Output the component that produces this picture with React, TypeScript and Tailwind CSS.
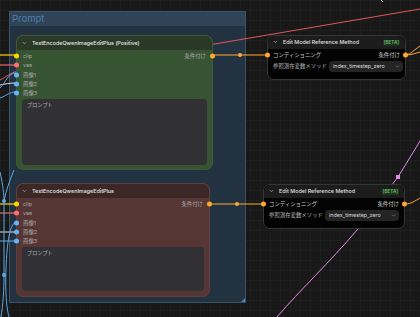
import { ChevronDown } from "lucide-react";

const FONT = "font-['Inter','Noto_Sans_CJK_JP',sans-serif]";

const SLOT_COLORS: Record<string, string> = {
  clip: "bg-[#ffd500]",
  vae: "bg-[#ff6e6e]",
  image: "bg-[#64b5f6]",
  cond: "bg-[#ffa931]",
};

type Slot = { label: string; kind: string };

const ENCODE_INPUTS: Slot[] = [
  { label: "clip", kind: "clip" },
  { label: "vae", kind: "vae" },
  { label: "画像1", kind: "image" },
  { label: "画像2", kind: "image" },
  { label: "画像3", kind: "image" },
];

function Dot({ kind, side }: { kind: string; side: "left" | "right" }) {
  return (
    <span
      className={`absolute top-1/2 h-[5px] w-[5px] -translate-y-1/2 rounded-full ${SLOT_COLORS[kind]} ${
        side === "left" ? "left-[-3px]" : "right-[-3px]"
      }`}
    />
  );
}

function Chevron() {
  return (
    <svg width="5" height="4" viewBox="0 0 5 4" className="shrink-0">
      <path d="M0.8 1 L2.5 2.8 L4.2 1" fill="none" stroke="#9a9a9a" strokeWidth="0.8" />
    </svg>
  );
}

function EncodeNode({
  title,
  left,
  top,
  width,
  height,
  body,
  head,
  border,
  boxHeight,
}: {
  title: string;
  left: string;
  top: string;
  width: string;
  height: string;
  body: string;
  head: string;
  border: string;
  boxHeight: string;
}) {
  return (
    <div
      className={`absolute ${left} ${top} ${width} ${height} flex flex-col rounded-[7px] border ${border} ${body}`}
    >
      <div className={`flex h-[14px] shrink-0 items-center gap-[5px] rounded-t-[7px] pl-[5px] ${head}`}>
        <Chevron />
        <span className="whitespace-nowrap text-[5.4px] font-medium text-[#e6e6e6]">{title}</span>
      </div>
      <div className="flex flex-col pt-[1.5px]">
        {ENCODE_INPUTS.map((slot, i) => (
          <div key={slot.label} className="relative flex h-[9.25px] items-center justify-between pl-[6px] pr-[6px]">
            <Dot kind={slot.kind} side="left" />
            <span className="text-[5.4px] text-[#a9a9a9]">{slot.label}</span>
            {i === 0 && (
              <>
                <span className="text-[5.4px] text-[#a9a9a9]">条件付け</span>
                <Dot kind="cond" side="right" />
              </>
            )}
          </div>
        ))}
      </div>
      <div
        className={`mx-[5px] mt-[1px] ${boxHeight} rounded-[4px] bg-[#313135] px-[5px] pt-[3px] text-[5.2px] leading-[7px]`}
      >
        <span className="font-medium text-[#a0a0a0]">プロンプト</span>
      </div>
    </div>
  );
}

function MethodNode({ left, top, width, padRight }: { left: string; top: string; width: string; padRight: string }) {
  return (
    <div className={`absolute ${left} ${top} ${width} flex h-[45px] flex-col rounded-[7px] border border-[#353535] bg-[#030303]`}>
      <div className="flex h-[13px] shrink-0 items-center justify-between rounded-t-[7px] bg-[#1c1c1c] pl-[5px] pr-[5px]">
        <div className="flex items-center gap-[5px]">
          <Chevron />
          <span className="whitespace-nowrap text-[5.4px] font-medium text-[#e0e0e0]">Edit Model Reference Method</span>
        </div>
        <span className="rounded-[1px] bg-[#1d331d] px-[1px] text-[4.6px] font-semibold leading-[6px] text-[#6cb86c]">
          [BETA]
        </span>
      </div>
      <div className="relative flex h-[12px] items-center justify-between pl-[5px] pr-[5px]">
        <Dot kind="cond" side="left" />
        <span className="text-[5.4px] text-[#c8c8c8]">コンディショニング</span>
        <span className="text-[5.4px] text-[#c8c8c8]">条件付け</span>
        <Dot kind="cond" side="right" />
      </div>
      <div className={`flex items-center justify-between gap-[2px] pl-[5px] ${padRight}`}>
        <span className="whitespace-nowrap text-[5.4px] text-[#bdbdbd]">参照潜在変数メソッド</span>
        <div className="flex h-[11px] w-[74px] shrink-0 items-center justify-between rounded-[4px] bg-[#242424] pl-[4px] pr-[3px]">
          <span className="whitespace-nowrap text-[5.4px] text-[#dcdcdc]">index_timestep_zero</span>
          <ChevronDown className="h-[5px] w-[5px] text-[#9a9a9a]" strokeWidth={2.5} />
        </div>
      </div>
    </div>
  );
}

export default function App() {
  return (
    <div
      className={`relative h-[317px] w-[420px] overflow-hidden bg-[#181818] bg-[linear-gradient(#1e1e1e_1px,transparent_1px),linear-gradient(90deg,#1e1e1e_1px,transparent_1px)] bg-[length:10px_10px] ${FONT}`}
    >
      {/* group */}
      <div className="absolute left-[9px] top-[11px] flex h-[292px] w-[237px] flex-col border border-[#3a5268] bg-[#233240]">
        <div className="flex h-[14px] items-center bg-[#2f4457] pl-[2px]">
          <span className="text-[9.5px] leading-none text-[#4f7ca4]">Prompt</span>
        </div>
        <div className="flex-1" />
        <div className="flex justify-end">
          <svg width="4" height="4" viewBox="0 0 4 4">
            <path d="M4 0 L4 4 L0 4 Z" fill="#4f86b8" />
          </svg>
        </div>
      </div>

      {/* links */}
      <svg className="absolute inset-0" width="420" height="317" viewBox="0 0 420 317" fill="none">
        <path d="M150 55 L420 9" stroke="#e05a5a" strokeWidth="1" />

        <path d="M0 55 L16 55" stroke="#ffd500" strokeWidth="1.2" />
        <path d="M0 65 L16 65" stroke="#f06565" strokeWidth="1.2" />
        <path d="M0 80 C6 77 10 73 18 71" stroke="#e05a5a" strokeWidth="1" />
        <path d="M0 85 C5 84 10 83 16 83" stroke="#e0e0e0" strokeWidth="1" />
        <path d="M0 88 C6 82 8 73 16 73" stroke="#5aa9ea" strokeWidth="1" />
        <path d="M0 98 C6 96 9 92 16 92" stroke="#5aa9ea" strokeWidth="1" />

        <path d="M0 204 L16 204" stroke="#ffd500" strokeWidth="1.2" />
        <path d="M0 213 L16 213" stroke="#f06565" strokeWidth="1.2" />
        <path d="M0 232 L16 232" stroke="#e0e0e0" strokeWidth="1" />
        <path d="M0 241 L16 241" stroke="#5aa9ea" strokeWidth="1" />
        <path d="M16 222 C10 224 7 240 6 270 C5 295 7 310 9 317" stroke="#5aa9ea" strokeWidth="1" />
        <path d="M0 172 C3 185 4 195 4 201 L4 275 C4 290 3 305 1 317" stroke="#5aa9ea" strokeWidth="1" />
        <path d="M14 170 C10 180 6 190 4 201" stroke="#5aa9ea" strokeWidth="1" />
        <circle cx="4" cy="201" r="2" fill="#5aa9ea" />
        <circle cx="4" cy="275" r="2" fill="#5aa9ea" />

        <path d="M213 55 L267 55" stroke="#ffa931" strokeWidth="1.2" />
        <circle cx="240" cy="55" r="2" fill="#ffa931" />
        <path d="M406 55 C412 55 416 53 420 52" stroke="#ffa931" strokeWidth="1" />
        <path d="M406 55 C411 54 414 50 420 46" stroke="#ffa931" strokeWidth="1" />

        <path d="M210 204 L263 204" stroke="#ffa931" strokeWidth="1.2" />
        <circle cx="237" cy="204" r="2" fill="#ffa931" />
        <path d="M405 204 C411 204 415 201 420 198" stroke="#ffa931" strokeWidth="1" />

        <path d="M428 128 L398 177 L357 230 C330 262 300 290 277 317" stroke="#e48be8" strokeWidth="1" />
        <rect x="396" y="175" width="4" height="4" fill="#e48be8" />
        <path d="M381 0 L383 2" stroke="#cfcfcf" strokeWidth="1" />
      </svg>

      <EncodeNode
        title="TextEncodeQwenImageEditPlus (Positive)"
        left="left-[16px]"
        top="top-[35px]"
        width="w-[197px]"
        height="h-[135px]"
        body="bg-[#365332]"
        head="bg-[#2a3826]"
        border="border-[#3d5a38]"
        boxHeight="h-[66px]"
      />
      <EncodeNode
        title="TextEncodeQwenImageEditPlus"
        left="left-[16px]"
        top="top-[183px]"
        width="w-[194px]"
        height="h-[114px]"
        body="bg-[#553634]"
        head="bg-[#3b2725]"
        border="border-[#603e3b]"
        boxHeight="h-[44px]"
      />

      <MethodNode left="left-[267px]" top="top-[35px]" width="w-[139px]" padRight="pr-[5px]" />
      <MethodNode left="left-[263px]" top="top-[184px]" width="w-[142px]" padRight="pr-[7px]" />
    </div>
  );
}
